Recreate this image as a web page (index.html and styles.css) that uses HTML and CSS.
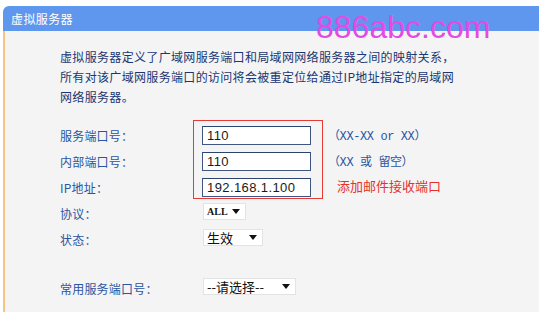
FILE: index.html
```html
<!DOCTYPE html>
<html>
<head>
    <meta charset="utf-8">
    <title>虚拟服务器</title>
    <link rel="stylesheet" href="styles.css">
</head>
<body>
    <div class="panel">
        <div class="panel-head">虚拟服务器</div>
        <div class="panel-body">
            <p class="intro">
                虚拟服务器定义了广域网服务端口和局域网网络服务器之间的映射关系，<br>
                所有对该广域网服务端口的访问将会被重定位给通过IP地址指定的局域网<br>
                网络服务器。
            </p>

            <div class="form-grid">
                <!-- annotation box around the three text fields -->
                <div class="mark-box"></div>

                <div class="label row-1">服务端口号：</div>
                <input class="field row-1" type="text" value="110">
                <div class="hint row-1">（XX-XX or XX）</div>

                <div class="label row-2">内部端口号：</div>
                <input class="field row-2" type="text" value="110">
                <div class="hint row-2">（XX 或 留空）</div>

                <div class="label row-3">IP地址：</div>
                <input class="field row-3" type="text" value="192.168.1.100">
                <div class="note row-3">添加邮件接收端口</div>

                <div class="label row-4">协议：</div>
                <div class="select row-4"><span class="latin">ALL</span><svg width="8" height="5" viewBox="0 0 8 5"><path d="M0 0h8L4 5z" fill="#111"/></svg></div>

                <div class="label row-5">状态：</div>
                <div class="select select-state row-5"><span>生效</span><svg width="8" height="5" viewBox="0 0 8 5"><path d="M0 0h8L4 5z" fill="#111"/></svg></div>

                <div class="label row-7">常用服务端口号：</div>
                <div class="select select-common row-7"><span>--请选择--</span><svg width="8" height="5" viewBox="0 0 8 5"><path d="M0 0h8L4 5z" fill="#111"/></svg></div>
            </div>
        </div>
    </div>

    <div class="watermark">886abc.com</div>
</body>
</html>
```

FILE: styles.css
```css
/* router admin page - virtual server */
html, body {
    margin: 0;
    height: 312px;
    overflow: hidden;
}
body {
    background-color: #fff;
    font-family: "Noto Sans CJK SC", "Liberation Sans", sans-serif;
    font-size: 12px;
    position: relative;
}
.panel {
    margin: 6px 0 0 3px;
    height: 306px;
    display: flex;
    flex-direction: column;
}
.panel-head {
    height: 25px;
    line-height: 25px;
    padding-left: 8px;
    background-color: #5f97ef;
    color: #fff;
    font-size: 12px;
    letter-spacing: 0.4px;
    border-top-left-radius: 6px;
}
.panel-body {
    flex: 1;
    background-color: #f4f4f5;
    border-left: 2px solid #f4c585;
}
.intro {
    margin: 0;
    padding: 16px 0 0 55px;
    line-height: 20px;
    color: #1b3670;
    letter-spacing: 0.33px;
    white-space: nowrap;
}
.form-grid {
    margin-top: 15px;
    padding-left: 55px;
    display: grid;
    grid-template-columns: 133px 130px auto;
    grid-template-rows: 26px 26px 26px 26px 26px 23px 26px;
}
.row-1 { grid-row: 1; }
.row-2 { grid-row: 2; }
.row-3 { grid-row: 3; }
.row-4 { grid-row: 4; }
.row-5 { grid-row: 5; }
.row-7 { grid-row: 7; }

.mark-box {
    grid-column: 2;
    grid-row: 1 / 4;
    margin: -2px 0 1px 0;
    border: 1.5px solid #e63a36;
}
.label {
    grid-column: 1;
    align-self: center;
    color: #2a55a0;
    letter-spacing: 0.2px;
}
.field {
    grid-column: 2;
    align-self: center;
    justify-self: start;
    margin: 0 0 0 9px;
    width: 109px;
    height: 19px;
    box-sizing: border-box;
    padding: 0 4px;
    border: 1px solid #3f5683;
    border-top-color: #2e4470;
    background-color: #fff;
    font-family: "Liberation Sans", sans-serif;
    font-size: 13px;
    letter-spacing: 0.4px;
    color: #1a1a1a;
    outline: none;
}
.hint {
    grid-column: 3;
    align-self: center;
    margin-left: 5px;
    font-family: "Liberation Mono", "Noto Sans CJK SC", monospace;
    font-size: 12px;
    letter-spacing: -0.4px;
    color: #2a55a0;
    white-space: nowrap;
}
.note {
    grid-column: 3;
    align-self: center;
    margin: 0 0 4px 14px;
    font-size: 13px;
    color: #e5322b;
    white-space: nowrap;
}
.select {
    grid-column: 2;
    align-self: center;
    justify-self: start;
    margin: 0 0 4px 10px;
    height: 17px;
    width: 43px;
    box-sizing: border-box;
    padding: 0 5px 0 3px;
    display: flex;
    align-items: center;
    justify-content: space-between;
    background-color: #fff;
    border: 1px solid #e3e3e3;
    color: #111;
    font-size: 13px;
}
.select .latin {
    font-family: "Liberation Serif", serif;
    font-size: 10px;
    font-weight: bold;
}
.select-state {
    width: 60px;
}
.select-common {
    width: 93px;
}
.watermark {
    position: absolute;
    left: 316px;
    top: 11px;
    font-family: "Liberation Sans", sans-serif;
    font-size: 32px;
    line-height: 32px;
    color: #e24ce4;
}
```
